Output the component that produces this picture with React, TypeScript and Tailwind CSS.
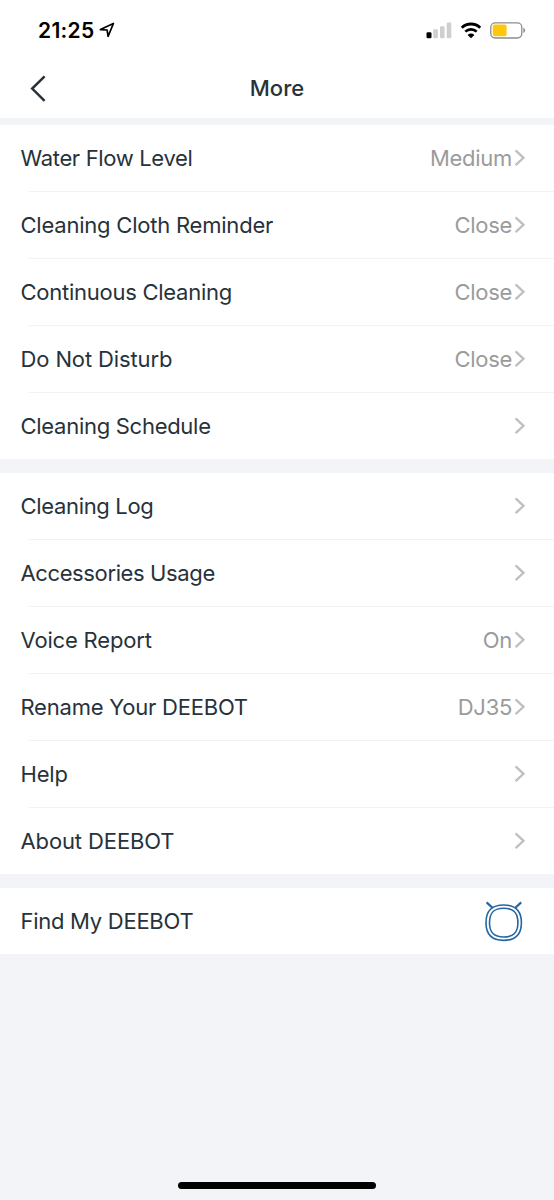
import clsx from 'clsx'

type Item = {
  label: string
  value?: string
  // tracking is tuned per label so the widths stay close to the iOS system font
  tracking: string
}

const cleaningItems: Item[] = [
  { label: 'Water Flow Level', value: 'Medium', tracking: 'tracking-[-0.34px]' },
  { label: 'Cleaning Cloth Reminder', value: 'Close', tracking: 'tracking-[-0.22px]' },
  { label: 'Continuous Cleaning', value: 'Close', tracking: 'tracking-[-0.26px]' },
  { label: 'Do Not Disturb', value: 'Close', tracking: 'tracking-[-0.12px]' },
  { label: 'Cleaning Schedule', tracking: 'tracking-[-0.28px]' },
]

const deviceItems: Item[] = [
  { label: 'Cleaning Log', tracking: 'tracking-[-0.33px]' },
  { label: 'Accessories Usage', tracking: 'tracking-[-0.38px]' },
  { label: 'Voice Report', value: 'On', tracking: 'tracking-[-0.18px]' },
  { label: 'Rename Your DEEBOT', value: 'DJ35', tracking: 'tracking-[-0.22px]' },
  { label: 'Help', tracking: 'tracking-[-0.2px]' },
  { label: 'About DEEBOT', tracking: 'tracking-[-0.12px]' },
]

function StatusBar() {
  return (
    <div className="flex h-[60px] items-center justify-between pl-[38px] pr-[28px]">
      <div className="flex items-center gap-[5px]">
        <span className="text-[21px] font-semibold leading-none tracking-[0.3px] text-black">21:25</span>
        <svg width="16" height="16" viewBox="0 0 16 16" fill="none" aria-hidden="true">
          <path d="M1.4 7.6 14.4 1.5 9.1 14.3 8.1 8Z" stroke="#000" strokeWidth="1.7" strokeLinejoin="round" />
        </svg>
      </div>
      <div className="flex items-center">
        <svg width="26" height="17" viewBox="0 0 26 17" aria-hidden="true">
          <rect x="0.5" y="10.3" width="5" height="6" rx="1.3" fill="#000" />
          <rect x="7.3" y="7.3" width="4.6" height="9" rx="1.2" fill="#cfcfcf" />
          <rect x="14" y="4.2" width="4.6" height="12.1" rx="1.2" fill="#cfcfcf" />
          <rect x="20.7" y="0.5" width="4.6" height="15.8" rx="1.2" fill="#cfcfcf" />
        </svg>
        <svg className="ml-[8px]" width="22" height="17" viewBox="0 0 22 17" aria-hidden="true">
          <path d="M1.8 5.8a13.2 13.2 0 0 1 18.4 0" stroke="#000" strokeWidth="2.9" fill="none" />
          <path d="M5.3 9.6a8.2 8.2 0 0 1 11.4 0" stroke="#000" strokeWidth="2.7" fill="none" />
          <path d="M7.6 12.9a4.9 4.9 0 0 1 6.8 0L11 16.2Z" fill="#000" />
        </svg>
        <svg className="ml-[8px]" width="36" height="17" viewBox="0 0 36 17" aria-hidden="true">
          <rect x="0.8" y="0.8" width="31" height="15.2" rx="4.4" stroke="#8d8d8d" strokeWidth="1.3" fill="none" />
          <rect x="2.8" y="2.6" width="13.8" height="11.6" rx="2" fill="#fdc70e" />
          <path d="M33.3 5.8c2.4 0.8 2.4 4.4 0 5.2Z" fill="#8d8d8d" />
        </svg>
      </div>
    </div>
  )
}

function Row({ item, last }: { item: Item; last: boolean }) {
  return (
    <li>
      <button type="button" className="flex h-[66px] w-full items-center justify-between pl-[20.5px] pr-[28px]">
        <span className={clsx('text-[22px] text-[#27323a]', item.tracking)}>{item.label}</span>
        <span className="flex items-center gap-[2px]">
          {item.value && <span className="text-[22px] tracking-[-0.3px] text-[#9b9b9b]">{item.value}</span>}
          <svg width="12" height="18" viewBox="0 0 12 18" fill="none" aria-hidden="true">
            <path d="M1.6 1.4 9.5 8.8 1.6 16.2" stroke="#bfbfbf" strokeWidth="2.3" />
          </svg>
        </span>
      </button>
      {!last && <div className="ml-[29px] h-px bg-[#f3f3f4]" />}
    </li>
  )
}

function Section({ items }: { items: Item[] }) {
  return (
    <ul className="bg-white">
      {items.map((item, i) => (
        <Row key={item.label} item={item} last={i === items.length - 1} />
      ))}
    </ul>
  )
}

export default function App() {
  return (
    <div className="flex h-[1200px] w-[554px] flex-col bg-[#f2f4f8] font-[Inter,sans-serif]">
      <header className="h-[118px] shrink-0 bg-white">
        <StatusBar />
        <div className="grid h-[57px] grid-cols-[1fr_auto_1fr] items-center px-[29px]">
          <button type="button" aria-label="Back" className="justify-self-start">
            <svg width="18" height="28" viewBox="0 0 18 28" fill="none" aria-hidden="true">
              <path d="M15.6 1.4 3.2 13.6 15.6 25.8" stroke="#27323a" strokeWidth="2.5" />
            </svg>
          </button>
          <h1 className="text-[22px] font-medium text-[#27323a]">More</h1>
        </div>
      </header>

      <main className="mt-[7px]">
        <Section items={cleaningItems} />
        <div className="h-[14px]" />
        <Section items={deviceItems} />
        <div className="h-[14px]" />
        <button type="button" className="flex h-[66px] w-full items-center justify-between bg-white pl-[20.5px] pr-[30px]">
          <span className="text-[22px] tracking-[-0.27px] text-[#27323a]">Find My DEEBOT</span>
          <svg width="40" height="42" viewBox="0 0 40 42" fill="none" stroke="#2466a2" aria-hidden="true">
            <path
              d="M19.7 5C31.5 5 37.4 10.4 37.4 22.8S31.5 40.4 19.7 40.4 2 35.2 2 22.8 7.900 5 19.7 5Z"
              strokeWidth="1.6"
            />
            <path
              d="M19.700 8.300C29.600 8.300 33.900 12.700 33.900 22.800S29.600 37 19.700 37 5.500 32.900 5.500 22.800 9.800 8.300 19.700 8.300Z"
              strokeWidth="1.6"
            />
            <path d="M2.600 2.400 8.700 8M37.200 2.400 31.100 8" strokeWidth="2.200" />
          </svg>
        </button>
      </main>

      <div className="mb-[11px] mt-auto h-[7px] w-[198px] self-center rounded-full bg-black" />
    </div>
  )
}
